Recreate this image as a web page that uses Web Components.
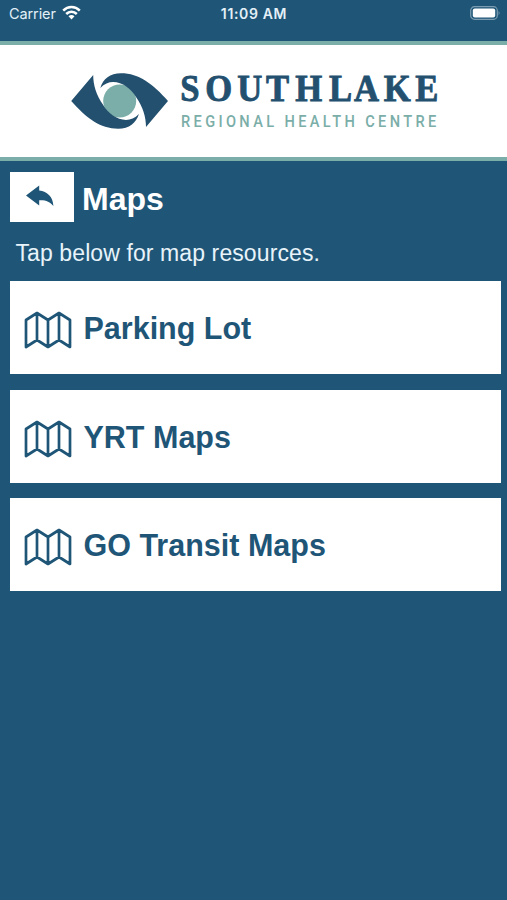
<!DOCTYPE html>
<html lang="en">
<head>
<meta charset="utf-8">
<title>Maps</title>
<style>
html,body{margin:0;background:#1f5677}
body{font-family:"Liberation Sans",Arial,sans-serif;--navy:#1f5677;--teal:#7baea8}
</style>
</head>
<body>
<maps-screen></maps-screen>
<script>
const define=(name,html)=>customElements.define(name,class extends HTMLElement{
  constructor(){super();this.attachShadow({mode:'open'}).innerHTML=html;}
});
define('status-bar',`<style>
:host{display:grid;grid-template-columns:1fr auto 1fr;height:41px;box-sizing:border-box;padding:5px 6px 0 9px;color:#e3f0f7;font:14.5px/18px Inter,sans-serif;align-items:start}
.l{display:flex;gap:6px}.l span{letter-spacing:-.1px}.t{font-weight:600;font-size:14px;letter-spacing:.65px;margin-right:2px}.r{justify-self:end;padding-top:1px}svg{display:block}
</style><div class="l"><span>Carrier</span><svg width="19" height="15" viewBox="0 0 19 15"><g fill="none" stroke="#fff" stroke-width="2.5"><path d="M1.2 5.6C6 .9 13 .9 17.8 5.6"/><path d="M4.2 9C7.2 6 11.8 6 14.8 9"/></g><path d="M6.5 11.2Q9.5 8.8 12.5 11.2L9.5 14.5Z" fill="#fff"/></svg></div>
<div class="t">11:09 AM</div>
<div class="r"><svg width="31" height="15" viewBox="0 0 31 15"><rect x=".7" y=".7" width="26.6" height="12.6" rx="3.8" fill="none" stroke="#7c9db1" stroke-width="1.2"/><rect x="2.8" y="2.6" width="22.4" height="9" rx="2" fill="#fff"/><path d="M28.6 5Q30.5 7 28.6 9.2Z" fill="#7c9db1"/></svg></div>`);
define('brand-header',`<style>
:host{display:block;height:120px;box-sizing:border-box;border:solid var(--teal);border-width:4px 0;background:#fff}
svg{display:block}
</style><svg width="507" height="112" viewBox="0 45 507 112">
<circle cx="119.700" cy="101" r="16.500" fill="#7baea8"/>
<g fill="#23506f"><path id="lid" d="M168 101L146 127C146 117 143 107 136 97C129 85 112 75.500 100.300 88C103 79 110 73.300 121 73.300C139 73.300 153 84 168 101Z"/>
<use href="#lid" transform="rotate(180 119.600 101)"/></g>
<text transform="translate(0 101.200) scale(.9 1)" font-family="Liberation Serif" font-weight="700" font-size="38.500" fill="#23506f" stroke="#23506f" stroke-width=".9" x="200.300 228 263.500 295.500 328 365.500 393.300 426.500 461.500">SOUTHLAKE</text>
<text transform="translate(181 127) scale(.88 1)" font-family="Roboto" font-weight="500" font-size="16.600" fill="#7baea8" textLength="290" lengthAdjust="spacing">REGIONAL HEALTH CENTRE</text></svg>`);
define('back-button',`<style>
:host{display:grid;place-items:center;width:64px;height:50px;background:#fff}
svg{display:block}
</style><svg width="64" height="50" viewBox="10 172 64 50"><path d="M26 195.500L39.200 185.400V190.600C47.500 191.500 53 197 53.400 206C50 201.500 45.500 199.800 39.200 200.200V205.400Z" fill="var(--navy)"/></svg>`);
define('page-title',`<style>
:host{display:flex;align-items:center;gap:8px;padding:11px 10px 0;height:50px}
h1{margin:0;color:#fff;font-size:32px;line-height:50px;padding-top:3px}
</style><back-button></back-button><h1><slot></slot></h1>`);
define('map-card',`<style>
:host{display:flex;align-items:center;box-sizing:border-box;height:93px;padding-left:13.500px;gap:12px;background:#fff;color:var(--navy);font-weight:700;font-size:30.500px}
svg{display:block;margin-top:5px}span{white-space:nowrap;padding-top:2px}
</style><svg width="48" height="40" viewBox="0 0 48 40" fill="none" stroke="var(--navy)" stroke-width="2.700" stroke-linejoin="round"><path d="M2 10L13 3L24 10L35 3L46 10V37L35 30L24 37L13 30L2 37ZM13 3V30M24 10V37M35 3V30"/></svg><span><slot></slot></span>`);
define('maps-screen',`<style>
:host{display:block;height:900px;overflow:hidden;background:var(--navy)}
p{margin:0;padding:16px 15.500px 0;color:#e8f3fa;font-size:23px;line-height:30px;letter-spacing:.1px}
main{display:grid;gap:15.500px;padding:13px 6.500px 0 10px}
</style><status-bar></status-bar><brand-header></brand-header><page-title>Maps</page-title>
<p>Tap below for map resources.</p>
<main><map-card>Parking Lot</map-card><map-card>YRT Maps</map-card><map-card>GO Transit Maps</map-card></main>`);
</script>
</body>
</html>
